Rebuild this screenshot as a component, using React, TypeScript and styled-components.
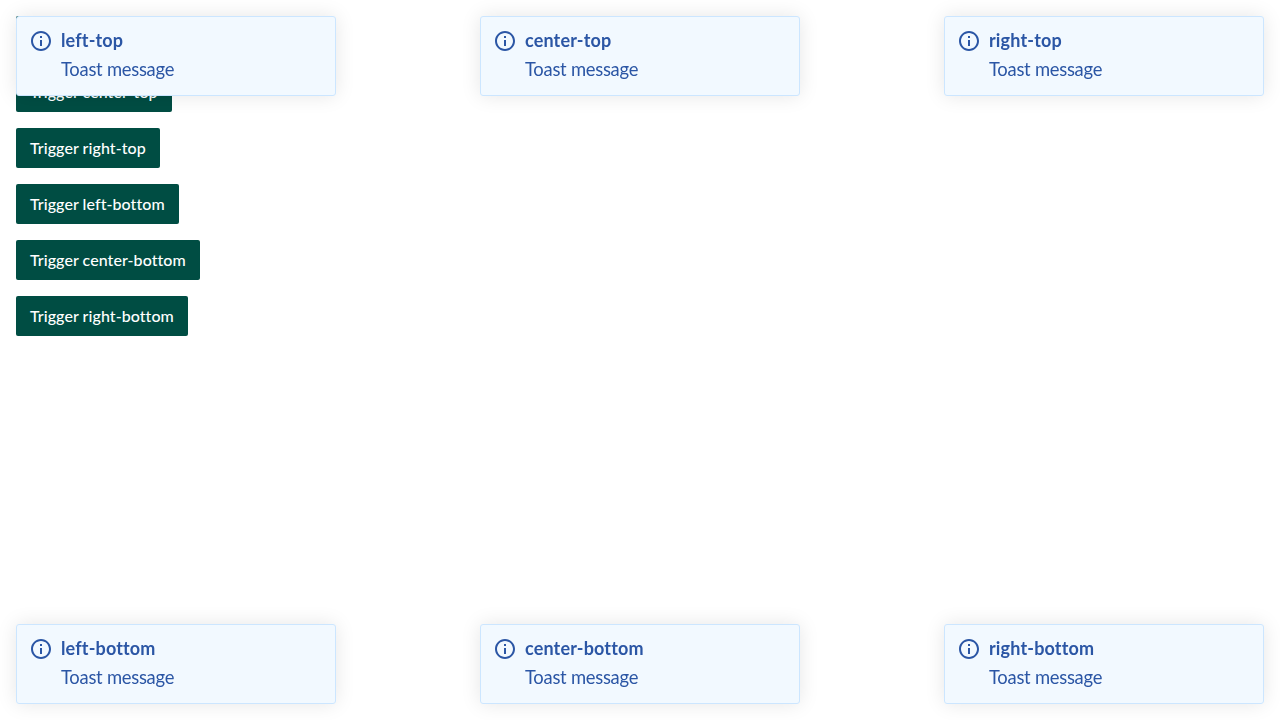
import React from "react";
import styled, { createGlobalStyle } from "styled-components";

const GlobalStyle = createGlobalStyle`
  *, *::before, *::after { box-sizing: border-box; }
  body {
    margin: 0;
    background: #fff;
    font-family: Lato, "Liberation Sans", sans-serif;
    font-variant-ligatures: none;
  }
`;

const Page = styled.main`
  min-height: 100vh;
  padding: 16px;
`;

const TriggerList = styled.div`
  display: flex;
  flex-direction: column;
  align-items: flex-start;
  gap: 16px;
`;

const TriggerButton = styled.button`
  height: 40px;
  padding: 0 14px;
  border: 0;
  border-radius: 2px;
  background: #004d43;
  color: #fff;
  font-family: inherit;
  font-size: 16px;
  font-weight: 500;
  line-height: 24px;
  letter-spacing: 0.06px;
  white-space: nowrap;
  cursor: pointer;
`;

const ToastLayer = styled.div`
  position: fixed;
  inset: 0;
  padding: 16px;
  display: grid;
  grid-template-columns: repeat(3, 320px);
  justify-content: space-between;
  align-content: space-between;
  pointer-events: none;
`;

const ToastCard = styled.section`
  display: flex;
  gap: 9px;
  height: 80px;
  padding: 9px 13px;
  border: 1px solid #cce6ff;
  border-radius: 3px;
  background: #f2f9ff;
  color: #2b56a5;
  box-shadow: 0 0 20px rgba(0, 0, 0, 0.1);
  pointer-events: auto;
`;

const InfoIcon = styled.svg`
  flex: none;
  width: 22px;
  height: 22px;
  margin-top: 4px;
`;

const ToastText = styled.div`
  display: flex;
  flex-direction: column;
  gap: 1px;
  font-size: 18px;
  line-height: 28px;
`;

const ToastTitle = styled.strong`
  font-weight: 700;
  letter-spacing: 0.15px;
`;

const ToastMessage = styled.span`
  font-size: 18.4px;
  letter-spacing: -0.26px;
`;

const positions = [
  "left-top",
  "center-top",
  "right-top",
  "left-bottom",
  "center-bottom",
  "right-bottom",
];

function Toast({ title }: { title: string }) {
  return (
    <ToastCard role="status">
      <InfoIcon viewBox="1 1 22 22" fill="currentColor" aria-hidden="true">
        <path d="M11 7h2v2h-2zm0 4h2v6h-2zm1-9C6.480 2 2 6.480 2 12s4.480 10 10 10 10-4.480 10-10S17.520 2 12 2zm0 18c-4.410 0-8-3.590-8-8s3.590-8 8-8 8 3.590 8 8-3.590 8-8 8z" />
      </InfoIcon>
      <ToastText>
        <ToastTitle>{title}</ToastTitle>
        <ToastMessage>Toast message</ToastMessage>
      </ToastText>
    </ToastCard>
  );
}

export default function App() {
  return (
    <>
      <GlobalStyle />
      <Page>
        <TriggerList>
          {positions.map((position) => (
            <TriggerButton key={position}>Trigger {position}</TriggerButton>
          ))}
        </TriggerList>
      </Page>
      <ToastLayer>
        {positions.map((position) => (
          <Toast key={position} title={position} />
        ))}
      </ToastLayer>
    </>
  );
}
